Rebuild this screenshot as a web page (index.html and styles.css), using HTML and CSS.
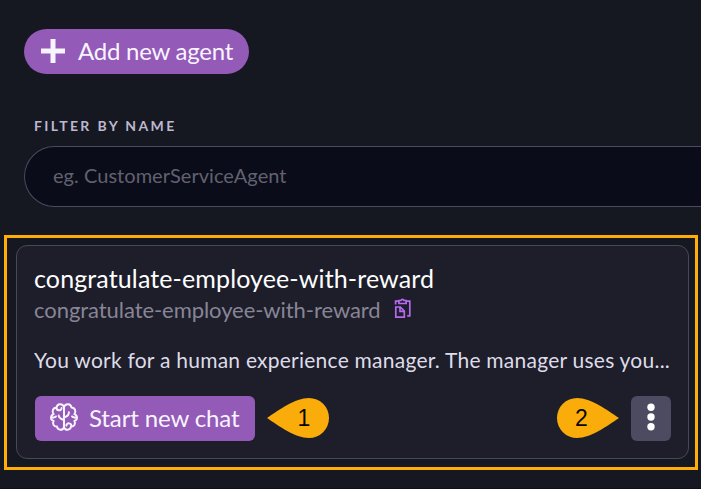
FILE: index.html
```html
<!DOCTYPE html>
<html lang="en">
<head>
<meta charset="utf-8">
<title>Agents</title>
<link rel="stylesheet" href="styles.css">
</head>
<body>
<main class="page">
  <button class="add-button">
    <svg class="plus" viewBox="0 0 24 24"><path d="M12 0v24M0 12h24"/></svg>
    <span class="add-label">Add new agent</span>
  </button>
  <label class="filter-label" for="filter">FILTER BY NAME</label>
  <div class="filter-box" id="filter"><span class="placeholder">eg. CustomerServiceAgent</span></div>
  <section class="highlight">
    <article class="card">
      <h2 class="title"><span>congratulate-employee-with-reward</span></h2>
      <div class="subtitle">
        <span class="slug">congratulate-employee-with-reward</span>
        <svg class="copy" viewBox="0 0 18 20"><path d="M1.6 5.5V2.2h2.8M12.4 2.2h3.4v14.6h-2.6M4.9 1.5v3h7.2v-3h-2a1.7 1.7 0 0 0-3.2 0zM1.8 8h4.5l4 4v6.2H1.8zM6 8v4.3h4.3"/></svg>
      </div>
      <p class="description"><span>You work for a human experience manager. The manager uses you...</span></p>
      <div class="actions">
        <button class="chat-button">
          <svg class="brain" viewBox="0 0 28 28"><path d="M14 4v20M14 4C12.5 0 7 .3 6.6 4.5 3 4.6 1.5 8.7 3.6 11.2c-3.4 1.5-3.4 5.5 0 6.8C2 21 4 23.7 7 23.6c.8 4 5.7 4.2 7 .7M14 4c1.5-4 7-3.7 7.4.5 3.6.1 5.1 4.2 3 6.7 3.4 1.5 3.4 5.5 0 6.8 1.6 3-.4 5.7-3.4 5.6-.8 4-5.7 4.2-7 .7M6.6 4.5c-.3 3.3 4.8 4 5 .5M21.3 23.3c.5-3.3-4.5-4.2-5-.8M8.7 12.5c.1 2.4 1.6 3.3 5.3 4.6M14 14.2c3.4-.7 5-2.1 4.9-5M2.8 14.4c1.2.2 2.4-.1 3.2-1M25.2 14.4c-1.2.2-2.4-.1-3.2-1"/></svg>
          <span class="chat-label">Start new chat</span>
        </button>
        <svg class="marker marker-one" viewBox="0 0 62 40"><path d="M0 20C12 12 28 0 42 0a20 20 0 0 1 0 40C28 40 12 28 0 20z"/><text x="37" y="28">1</text></svg>
        <svg class="marker marker-two" viewBox="0 0 62 40"><path d="M62 20C50 12 34 0 20 0a20 20 0 0 0 0 40C34 40 50 28 62 20z"/><text x="24.5" y="28">2</text></svg>
        <button class="menu-button" aria-label="More options">
          <svg class="dots" viewBox="0 0 8 28"><circle cx="4" cy="4.3" r="3.7"/><circle cx="4" cy="14" r="3.7"/><circle cx="4" cy="23.7" r="3.7"/></svg>
        </button>
      </div>
    </article>
  </section>
</main>
</body>
</html>
```
FILE: styles.css
```css
* { box-sizing: border-box; }
body { margin: 0; background: #151721; font-family: Lato, sans-serif; overflow: hidden; }
button { border: 0; padding: 0; font: inherit; color: #f8f4ff; display: flex; align-items: center; background: #935ab7; }
svg { display: block; flex: none; overflow: visible; }
.page { height: 489px; padding-top: 29px; display: flex; flex-direction: column; border-bottom: 1px solid #11101a; }
.add-button { width: 225px; height: 45px; margin-left: 24px; padding: 0 0 2px 17px; border-radius: 23px; font-size: 24px; letter-spacing: -0.23px; white-space: nowrap; }
.plus { width: 24px; height: 24px; margin-right: 13px; fill: none; stroke: #f8f4ff; stroke-width: 5; }
.filter-label { height: 20px; margin: 42px 0 0 34px; line-height: 20px; font-size: 14px; font-weight: 700; letter-spacing: 2.36px; color: #bcb8cd; white-space: nowrap; }
.filter-box { height: 61px; margin: 10px 0 0 24px; padding: 0 0 3px 28px; display: flex; align-items: center; border: 1px solid #4c4960; border-right: 0; border-radius: 31px 0 0 31px; background: #0a0c19; font-size: 20px; letter-spacing: 0.04px; color: #62616f; }
.highlight { width: 694px; height: 235px; margin: 28px 0 0 4px; padding: 7px 6px 8px 9px; border: 3px solid #ffad08; }
.card { height: 214px; padding: 16px 17px 0 17px; border: 1px solid #494759; border-radius: 11px; background: #1d1e2a; }
.title { height: 32px; margin: 0; line-height: 32px; font-size: 25px; font-weight: 400; letter-spacing: 0.12px; color: #fff; white-space: nowrap; }
.subtitle { height: 30px; display: flex; align-items: center; gap: 14px; font-size: 22px; letter-spacing: -0.06px; color: #888596; white-space: nowrap; }
.copy { width: 18px; height: 20px; margin: 0 0 1px -1px; fill: none; stroke: #b66af1; stroke-width: 1.7; }
.description { height: 30px; margin: 21px 0 0; line-height: 30px; font-size: 21px; letter-spacing: 0.24px; color: #dedce8; white-space: nowrap; }
.actions { height: 45px; margin: 21px 0 0 1px; display: flex; align-items: center; }
.chat-button { width: 220px; height: 45px; padding: 0 0 2px 15px; border-radius: 6px; font-size: 24px; letter-spacing: -0.12px; white-space: nowrap; }
.brain { width: 28px; height: 28px; margin: -2px 11px 0 0; fill: none; stroke: #f8f4ff; stroke-width: 2; stroke-linecap: round; stroke-linejoin: round; }
.marker { width: 62px; height: 40px; margin-bottom: 1px; fill: #faad0a; font-family: "Liberation Sans", sans-serif; font-size: 23px; }
.marker text { fill: #080600; text-anchor: middle; }
.marker-one { margin-left: 12px; }
.marker-two { margin-left: auto; }
.menu-button { width: 40px; height: 45px; margin-left: 12px; justify-content: center; border-radius: 6px; background: #4d4b61; }
.dots { width: 8px; height: 28px; margin-top: -4px; fill: #fff; }
```
